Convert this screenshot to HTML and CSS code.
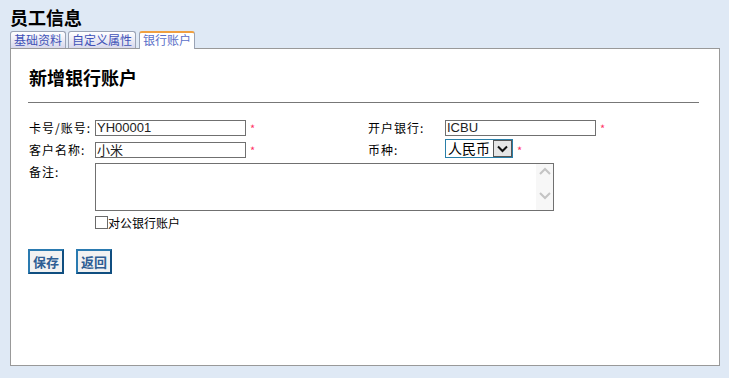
FILE: index.html
```html
<!DOCTYPE html>
<html lang="zh-CN">
<head>
    <meta charset="UTF-8">
    <title>员工信息</title>
    <link rel="stylesheet" href="styles.css">
</head>
<body>
    <h1 class="page-title">员工信息</h1>

    <div class="tabs">
        <a class="tab">基础资料</a>
        <a class="tab">自定义属性</a>
        <a class="tab active">银行账户</a>
    </div>

    <div class="panel">
        <h2 class="panel-title">新增银行账户</h2>
        <hr class="divider">

        <div class="form">
            <label class="lbl">卡号/账号:</label>
            <div class="field"><input class="txt" type="text" value="YH00001"><span class="req">*</span></div>
            <label class="lbl">开户银行:</label>
            <div class="field"><input class="txt" type="text" value="ICBU"><span class="req">*</span></div>

            <label class="lbl">客户名称:</label>
            <div class="field"><input class="txt" type="text" value="小米"><span class="req">*</span></div>
            <label class="lbl">币种:</label>
            <div class="field">
                <span class="select">
                    <span class="select-val">人民币</span>
                    <span class="select-btn">
                        <svg width="11" height="8" viewBox="0 0 11 8"><path d="M1 1.5 L5.5 6 L10 1.5" fill="none" stroke="#111" stroke-width="2"/></svg>
                    </span>
                </span>
                <span class="req">*</span>
            </div>

            <label class="lbl">备注:</label>
            <div class="field wide">
                <div class="memo">
                    <span class="memo-scroll">
                        <svg width="12" height="40" viewBox="0 0 12 40"><path d="M1 10 L6 5 L11 10" fill="none" stroke="#c4c4c4" stroke-width="2"/><path d="M1 29 L6 34 L11 29" fill="none" stroke="#c4c4c4" stroke-width="2"/></svg>
                    </span>
                </div>
                <label class="check"><span class="box"></span>对公银行账户</label>
            </div>
        </div>

        <div class="actions">
            <button class="btn">保存</button>
            <button class="btn">返回</button>
        </div>
    </div>
</body>
</html>
```

FILE: styles.css
```css
* {
    margin: 0;
    padding: 0;
    box-sizing: border-box;
}

body {
    font-family: "Noto Sans CJK SC", "DejaVu Sans", sans-serif;
    font-size: 12px;
    background: #dfe9f5;
    padding: 6px 10px 0 10px;
    color: #000;
}

.page-title {
    font-size: 18px;
    font-weight: bold;
    line-height: 22px;
    height: 25px;
}

.tabs {
    display: flex;
    gap: 2px;
    height: 17px;
    align-items: flex-end;
}

.tab {
    display: block;
    height: 17px;
    padding: 0 3px;
    line-height: 15px;
    font-size: 12px;
    color: #4052b8;
    border: 1px solid #9aa3b5;
    border-bottom: none;
    border-radius: 3px 3px 0 0;
    background: linear-gradient(#ffffff, #d8d8ec);
}

.tab.active {
    height: 18px;
    margin-left: 1px;
    background: #fff;
    color: #5a6fc8;
    border-top: 2px solid #f0a040;
    border-color: #f0a040 #9aa3b5 #9aa3b5 #9aa3b5;
    line-height: 14px;
    position: relative;
    top: 1px;
}

.panel {
    width: 710px;
    height: 318px;
    background: #fff;
    border: 1px solid #999;
    padding: 17px 20px 0 17px;
}

.panel-title {
    font-size: 18px;
    font-weight: bold;
    line-height: 22px;
    margin-left: 1px;
}

.divider {
    border: none;
    border-top: 1px solid #777;
    margin-top: 14px;
}

.form {
    display: grid;
    grid-template-columns: 67px 272px 78px 1fr;
    row-gap: 5px;
    margin-top: 16px;
    line-height: 17px;
}

.lbl {
    padding-left: 1px;
    white-space: nowrap;
    letter-spacing: 1px;
}

.field {
    display: flex;
    align-items: center;
}

.field.wide {
    grid-column: 2 / span 3;
    flex-direction: column;
    align-items: flex-start;
}

.txt {
    width: 151px;
    height: 16px;
    border: 1px solid #707070;
    font-family: "Liberation Sans", "Noto Sans CJK SC", sans-serif;
    font-size: 13px;
    padding: 0 1px;
    color: #222;
}

.req {
    color: #ff3366;
    font-size: 11px;
    margin-left: 4px;
    line-height: 10px;
}

.select {
    display: flex;
    height: 19px;
    border: 1px solid #2a7fa8;
    margin-top: -2px;
}

.select-val {
    padding: 0 3px 0 2px;
    font-size: 14px;
    line-height: 17px;
}

.select-btn {
    width: 19px;
    background: #e6e6e6;
    border: 1px solid #555;
    display: flex;
    align-items: center;
    justify-content: center;
}

.memo {
    width: 459px;
    height: 48px;
    border: 1px solid #707070;
    display: flex;
    justify-content: flex-end;
}

.memo-scroll {
    width: 17px;
    background: #f7f7f7;
    display: flex;
    justify-content: center;
}

.check {
    display: flex;
    align-items: center;
    margin-top: 3px;
}

.box {
    width: 13px;
    height: 13px;
    border: 1px solid #6a6a6a;
    background: #fff;
}

.actions {
    display: flex;
    gap: 12px;
    margin-top: 18px;
}

.btn {
    height: 25px;
    padding: 0 3px;
    font-family: "Noto Sans CJK SC", sans-serif;
    font-size: 13px;
    font-weight: bold;
    color: #2f5e94;
    background: #f2f2f2;
    border: 2px solid #1c6aa0;
    border-color: #2a7ab0 #104e80 #104e80 #2a7ab0;
}
```
